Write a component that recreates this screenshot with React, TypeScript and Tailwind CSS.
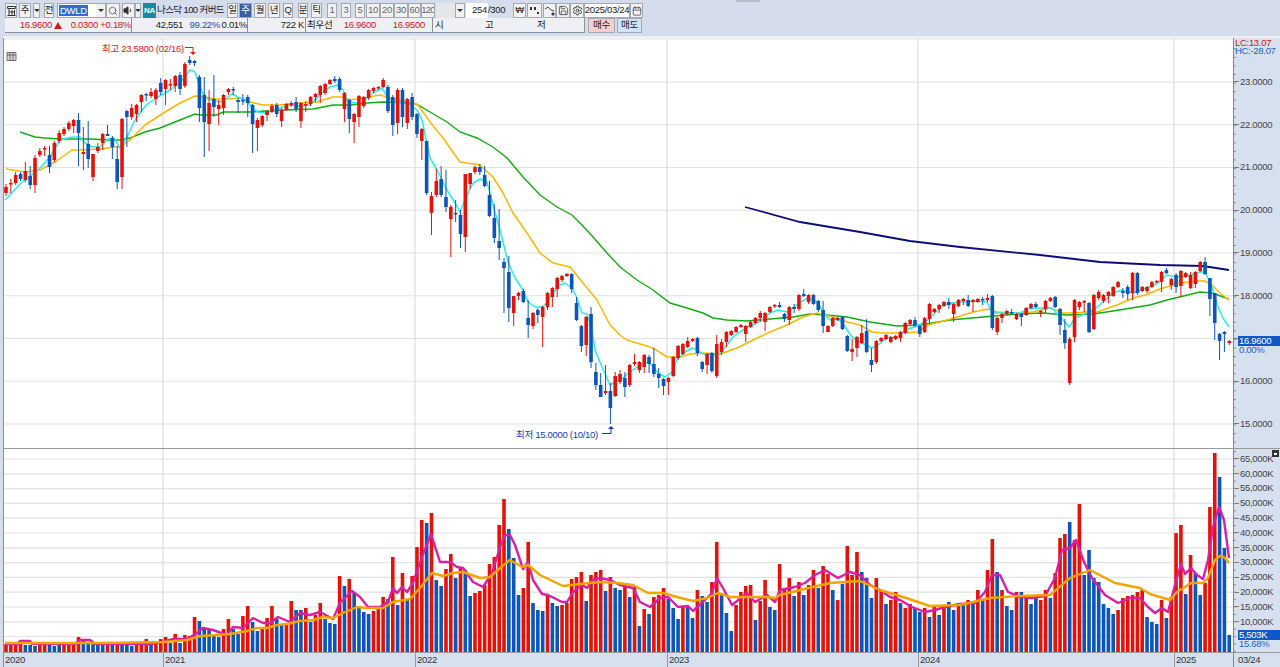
import type { ReactNode } from 'react'
import { Search, Volume1, Save, Settings, Calendar } from 'lucide-react'

const X = (i: number) => 6 + 4.835 * i

// price candles in page px: [top, bottom, wickTop, wickBottom], negative top = blue candle
const CANDLES: number[][] = [
  [187,193,184,196],[183,184,179,193],[175,183,172,185],[-174,179,172,181],[171,180,162,182],[-176,185,166,189],[158,185,155,193],[151,155,148,157],[148,149,146,156],[-155,167,146,173],
  [143,160,141,162],[133,141,130,143],[129,134,127,136],[123,129,121,131],[120,126,119,133],[-120,133,113,166],[152,154,127,170],[-144,159,121,168],[154,177,154,181],[147,151,143,153],
  [134,143,133,150],[-134,136,125,136],[-138,147,136,159],[-159,182,146,189],[119,177,118,189],[-111,117,110,147],[108,117,104,120],[105,114,104,122],[95,102,94,112],[-94,95,93,101],
  [92,96,88,98],[90,99,88,105],[-83,92,78,95],[80,89,79,105],[84,85,79,90],[76,86,75,92],[-75,89,72,95],[64,86,62,88],[-60,63,56,65],[-61,63,60,66],
  [-77,108,75,122],[-95,122,77,157],[103,124,90,151],[-99,107,75,117],[105,109,100,125],[95,108,94,115],[89,92,88,95],[-89,90,87,95],[-100,102,98,113],[-100,101,94,105],
  [-97,103,95,117],[-105,124,104,153],[120,128,118,151],[116,125,115,127],[111,115,110,121],[106,112,104,113],[-105,114,103,117],[110,121,108,127],[104,110,103,111],[103,105,101,107],
  [-102,109,97,112],[103,121,102,128],[104,105,101,112],[97,104,96,106],[94,97,93,102],[86,95,85,103],[84,93,83,95],[80,84,79,85],[-79,81,76,83],[-79,90,77,92],
  [93,109,92,122],[-100,119,99,133],[114,122,113,143],[96,117,95,127],[97,106,96,108],[90,98,89,100],[88,91,87,93],[87,88,86,90],[80,87,78,88],[-87,111,85,113],
  [-97,125,95,136],[90,123,88,134],[-90,117,88,127],[99,123,98,129],[-97,117,93,120],[-114,134,113,138],[129,141,128,160],[-141,193,141,195],[196,213,192,235],[181,195,169,197],
  [-179,195,166,197],[-197,207,170,212],[207,219,205,257],[-213,214,200,222],[-215,234,210,248],[174,237,174,252],[173,184,173,189],[167,172,166,174],[-167,172,164,175],[-175,186,166,187],
  [-195,216,181,217],[-218,238,204,243],[-241,248,209,260],[-262,268,258,313],[-272,308,256,322],[296,313,296,326],[293,296,292,300],[-291,302,289,303],[-318,325,300,338],[313,326,312,329],
  [-310,315,308,323],[307,317,306,347],[293,307,292,310],[288,297,287,307],[278,289,277,297],[276,280,275,282],[274,276,273,277],[-274,289,273,293],[-303,320,297,321],[-326,346,325,352],
  [317,345,316,356],[-314,362,307,368],[-372,385,363,390],[-385,397,373,397],[391,393,365,395],[-391,408,383,424],[376,396,372,397],[374,382,370,384],[-378,387,372,397],[365,385,364,387],
  [362,364,354,366],[362,370,361,373],[355,367,354,373],[-357,364,355,373],[-364,374,348,377],[-374,378,368,388],[-379,386,378,395],[378,382,377,395],[357,376,356,377],[346,358,345,360],
  [344,354,343,355],[341,347,337,348],[339,341,338,342],[-338,353,337,356],[-362,369,361,372],[354,365,353,374],[-353,371,352,373],[344,376,335,378],[342,352,339,355],[332,342,331,347],
  [331,335,330,336],[327,332,326,333],[325,327,324,328],[326,334,325,342],[322,327,321,328],[318,323,317,324],[313,318,311,322],[313,322,312,331],[307,312,306,313],[305,306,304,308],
  [-305,307,302,308],[-314,319,313,322],[307,320,306,325],[-307,309,304,313],[295,309,294,311],[-294,296,289,297],[295,302,294,304],[-295,304,294,305],[-301,310,300,312],[-310,326,301,333],
  [326,332,325,332],[318,326,317,327],[318,320,317,321],[-317,329,316,330],[-336,351,335,352],[349,352,339,361],[337,348,336,357],[333,343,325,344],[-331,352,319,353],[-360,365,348,372],
  [341,362,340,364],[338,341,337,342],[335,339,334,340],[337,342,336,343],[336,339,335,340],[332,338,331,342],[323,333,322,334],[320,324,319,325],[-320,325,317,327],[-326,334,325,337],
  [318,332,317,333],[304,319,303,323],[309,312,308,313],[305,309,304,313],[302,306,301,307],[-302,305,298,309],[304,314,303,322],[300,306,299,307],[299,301,298,305],[-300,306,295,307],
  [300,302,299,312],[299,302,298,303],[-299,300,297,305],[298,300,294,302],[-296,328,295,330],[318,332,317,335],[314,318,313,323],[311,314,310,315],[-312,313,309,315],[314,319,313,320],
  [-314,317,313,326],[308,315,307,316],[304,308,303,309],[-304,307,302,308],[311,312,310,317],[301,309,300,313],[298,301,297,302],[-297,307,296,308],[-309,325,308,335],[-330,343,319,349],
  [339,383,337,385],[300,337,299,342],[302,307,301,310],[301,302,300,312],[-303,332,302,333],[295,329,294,330],[292,298,290,300],[295,301,294,303],[292,296,291,303],[287,296,286,297],
  [282,287,281,288],[-291,293,288,298],[-287,294,285,300],[273,293,272,300],[-273,293,272,295],[287,291,286,292],[287,291,286,293],[282,287,281,288],[281,282,280,283],[272,282,271,292],
  [-270,273,268,274],[279,285,278,290],[-275,287,273,293],[271,286,270,297],[273,277,272,278],[275,288,272,289],[272,284,271,288],[262,271,261,272],[-262,274,257,275],[-278,299,278,316],
  [-293,323,293,340],[-334,341,333,360],[-332,334,331,352],[341,343,340,345],
]

// volume bar tops in page px, negative = blue bar
const VOLUME: number[] = [
  644,644,644,642,-645,-645,-646,645,645,-645,-646,-645,645,645,645,637,-641,-642,-643,-645,
  -645,642,-644,642,-644,-645,-646,645,645,639,-644,644,639,637,-643,634,-643,635,636,617,
  -621,-628,-630,-635,-637,629,619,-629,-634,616,606,-622,-631,628,618,606,-619,-625,624,601,
  -610,-610,608,-622,615,603,-619,-623,-624,576,-586,579,-593,-608,-612,-614,611,609,597,-599,
  557,-605,573,-600,576,547,520,-523,513,-580,-586,569,554,-578,568,-570,-596,593,591,585,
  564,557,525,499,-529,-558,-595,588,542,-603,-610,-611,596,-603,-606,605,603,579,577,572,
  -601,575,572,570,-591,577,-588,-590,586,-597,587,-626,609,-614,597,595,588,-599,-608,-619,
  607,-607,-618,590,-596,-602,582,542,-593,-613,-631,605,592,586,585,-620,601,580,-607,-610,
  564,590,578,-596,582,-595,585,570,-588,566,574,-590,600,-584,546,575,552,-572,-578,-598,
  578,590,-604,600,592,-603,608,604,-608,-612,608,-617,605,-615,605,-602,-610,603,-605,600,
  -602,590,-600,570,539,-572,590,-606,-610,592,-592,596,-604,-596,600,590,-598,573,538,534,
  -522,540,504,-575,-550,-578,-582,-604,-608,-614,610,598,596,595,592,590,-617,-622,-624,600,
  -618,597,533,525,-594,555,-573,-595,583,507,453,-477,-548,-635,
]

const CYAN = '5,200 22,182 38,170 50,157 60,140 72,137 80,137 85,143 92,147 100,147 108,139 114,138 120,148 128,135 135,120 146,105 158,97 170,90 180,83 190,70 195,72 200,87 205,98 215,101 222,102 232,94 240,98 247,100 252,108 258,112 265,113 272,110 280,108 290,105 300,106 310,105 315,100 322,93 330,87 337,85 343,90 348,102 357,103 363,102 368,97 373,93 382,88 388,98 395,102 403,103 408,103 417,110 422,120 430,158 437,170 447,190 455,203 460,212 467,195 473,183 480,179 487,182 493,205 500,230 508,262 515,278 523,290 528,302 535,307 542,307 548,302 553,293 560,285 565,283 572,288 577,298 582,313 587,314 592,330 595,350 602,367 610,385 620,380 630,372 640,365 648,362 653,366 658,373 665,377 672,372 677,360 685,352 692,348 697,350 703,354 717,355 720,353 727,345 733,337 740,332 748,327 757,323 763,319 770,313 778,310 787,312 793,308 800,302 808,298 817,302 823,312 830,320 837,319 842,322 847,330 853,338 860,342 866,345 872,348 878,345 887,338 897,337 905,330 917,326 928,320 935,313 943,305 952,303 962,302 977,301 987,302 992,313 1000,313 1010,313 1020,313 1028,309 1040,308 1052,308 1058,315 1063,320 1069,327 1075,318 1087,313 1095,309 1103,302 1113,293 1122,290 1133,293 1147,288 1158,283 1167,275 1177,277 1187,276 1200,272 1205,272 1212,287 1218,307 1223,318 1229,327'
const ORANGE = '6,169 25,172 40,170 55,162 65,155 72,150 80,150 100,149 115,147 120,147 130,140 145,125 165,112 180,103 195,96 205,97 215,99 227,99 240,98 250,102 263,105 280,105 300,103 317,102 333,97 343,97 350,100 363,98 380,95 393,99 413,103 418,105 430,122 443,138 460,162 480,165 493,177 503,193 513,213 527,233 540,253 553,263 570,267 583,283 597,300 610,325 620,335 627,340 637,343 653,348 667,357 680,357 690,354 703,353 720,354 737,348 753,340 770,332 787,325 803,317 817,313 833,317 847,322 860,325 872,332 883,333 903,333 917,332 928,325 940,322 957,317 973,312 988,309 997,312 1013,313 1033,312 1050,308 1063,313 1073,313 1087,312 1097,312 1117,305 1133,298 1145,295 1160,289 1180,283 1197,281 1205,281 1212,285 1220,293 1229,300'
const GREEN = '20,132 35,137 45,138 60,139 90,139 110,140 120,140 130,138 145,132 160,128 180,120 195,114 200,115 217,115 223,112 250,112 283,110 313,109 333,105 350,105 367,103 383,102 413,103 418,105 430,112 447,122 460,132 477,138 493,147 507,158 523,177 540,195 557,207 572,215 582,225 593,237 607,253 620,267 637,280 653,290 670,303 687,308 703,313 713,318 727,320 747,321 770,319 793,317 810,314 827,315 847,317 870,322 897,326 920,325 950,320 983,317 1017,314 1043,313 1067,315 1093,314 1113,311 1150,305 1167,300 1200,292 1212,293 1229,299'
const NAVY = '745,207 800,222 860,232 910,241 960,247 1040,255 1100,262 1140,264 1160,265 1203,266 1229,270'
const VOL_MAGENTA = '5,644 18,644 20,641 30,641 32,644 75,644 80,640 90,640 95,644 150,644 163,642 173,639 187,639 197,633 203,628 213,630 227,635 233,627 243,628 253,618 263,623 270,623 278,617 290,622 300,613 310,615 320,612 333,619 340,603 352,591 360,597 368,607 380,607 388,602 393,588 397,593 402,587 407,592 413,583 422,557 431,534 440,562 450,562 457,567 463,568 473,582 483,587 492,573 500,547 505,535 510,535 515,545 523,569 528,562 533,580 542,594 548,595 562,602 567,602 573,592 582,585 587,588 593,580 600,578 610,580 620,585 633,588 640,602 650,607 660,598 668,597 678,607 688,606 693,611 703,602 712,593 717,578 723,588 732,605 747,593 755,602 767,595 775,602 780,590 795,587 805,583 815,575 825,570 838,578 850,572 860,575 870,585 880,590 890,597 900,600 912,607 925,612 935,610 945,607 960,604 975,603 985,592 992,575 1000,575 1008,592 1020,597 1032,598 1045,596 1055,578 1062,550 1070,548 1076,540 1084,562 1092,578 1105,595 1118,603 1130,598 1140,598 1148,607 1155,613 1162,608 1168,612 1175,585 1181,564 1185,574 1191,568 1197,575 1203,579 1208,560 1213,527 1219,507 1224,520 1229,558'
const VOL_ORANGE = '5,643 100,643 163,642 187,640 200,636 217,635 230,634 247,631 257,628 267,628 277,625 287,624 300,621 313,620 323,617 333,618 343,613 357,607 367,608 383,608 393,602 410,599 420,588 432,573 443,576 453,573 463,572 480,578 490,577 500,568 510,560 522,567 528,565 540,575 563,586 580,584 600,582 617,583 633,585 648,593 663,593 677,597 693,601 707,598 718,593 730,597 767,597 775,598 780,595 800,590 830,583 860,581 880,590 900,596 930,606 960,605 990,598 1020,596 1050,595 1070,578 1090,570 1115,583 1140,588 1150,594 1160,597 1170,600 1177,592 1185,587 1191,583 1203,583 1208,578 1215,560 1220,556 1224,557 1229,563'

const PRICE_LABELS = ['23.0000', '22.0000', '21.0000', '20.0000', '19.0000', '18.0000', '', '16.0000', '15.0000']
const VOL_LABELS = ['65,000K', '60,000K', '55,000K', '50,000K', '45,000K', '40,000K', '35,000K', '30,000K', '25,000K', '20,000K', '15,000K', '10,000K']
const YEAR_GRID = [163, 415, 667, 918, 1174]

function Btn({ className = '', children }: { className?: string; children?: ReactNode }) {
  return (
    <div className={`h-[15px] flex items-center justify-center shrink-0 border border-[#a3a8b2] bg-[#f1f1f1] overflow-hidden ${className}`}>
      {children}
    </div>
  )
}

function Caret() {
  return <span className="w-0 h-0 border-x-[3px] border-x-transparent border-t-[3px] border-t-[#333]" />
}

function Toolbar() {
  return (
    <div className="relative pt-[3px] pl-[5px] h-[36px] shrink-0 bg-[#d5dcec] text-[#222] text-[9.5px] tracking-[-0.3px]">
      <div className="absolute left-[736px] top-0 w-[24px] h-[2px] bg-[#b8bcc4]" />
      <div className="flex h-[15px] items-center">
        <Btn className="w-[12px]">
          <svg width="9" height="10" viewBox="0 0 9 10" fill="none" stroke="#333"><path d="M.5.5h8v2h-8zM2 2.5v7M5 4v5M7.5 4v5M2 6h6M.5 9.5h8" /></svg>
        </Btn>
        <Btn className="ml-[2px] w-[12px]">주</Btn>
        <Btn className="ml-[2px] w-[7px]"><Caret /></Btn>
        <Btn className="ml-[4px] w-[10px]">전</Btn>
        <div className="ml-[3px] w-[49px] h-[15px] flex items-center bg-white border border-[#a3a8b2]">
          <span className="ml-[1px] bg-[#2f6fd0] text-white px-[1px] leading-[11px]">DWLD</span>
          <Btn className="ml-auto w-[9px] !h-[13px] border-0"><Caret /></Btn>
        </div>
        <Btn className="w-[14px]"><Search size={10} strokeWidth={1.6} color="#444" /></Btn>
        <Btn className="ml-[2px] w-[13px]"><Volume1 size={11} fill="#333" color="#333" /></Btn>
        <Btn className="w-[6px]"><Caret /></Btn>
        <div className="ml-[2px] w-[13px] h-[15px] flex items-center justify-center bg-[#148c9c] text-white text-[8px] font-bold">NA</div>
        <div className="w-[69px] pl-[1px] whitespace-nowrap tracking-[-0.6px]">나스닥 100 커버드</div>
        <Btn className="ml-[2px] w-[11px]">일</Btn>
        <Btn className="ml-[1px] w-[13px] !bg-[#3a5f9c] text-white">주</Btn>
        <Btn className="ml-[2px] w-[12px]">월</Btn>
        <Btn className="ml-[2px] w-[12px]">년</Btn>
        <Btn className="ml-[3px] w-[10px]">Q</Btn>
        <Btn className="ml-[5px] w-[10px]">분</Btn>
        <Btn className="ml-[3px] w-[11px]">틱</Btn>
        <Btn className="ml-[5px] w-[10px] text-[#666]">1</Btn>
        <Btn className="ml-[4px] w-[10px] text-[#666]">3</Btn>
        <Btn className="ml-[4px] w-[10px] text-[#666]">5</Btn>
        <Btn className="ml-[1px] w-[14px] text-[#666]">10</Btn>
        <Btn className="w-[14px] text-[#666]">20</Btn>
        <Btn className="w-[14px] text-[#666]">30</Btn>
        <Btn className="w-[13px] text-[#666]">60</Btn>
        <Btn className="w-[14px] text-[#666] tracking-[-0.8px]">120</Btn>
        <div className="ml-[1px] w-[19px] h-[15px] bg-[#e4e6ea]" />
        <Btn className="w-[10px]"><Caret /></Btn>
        <div className="ml-[1px] w-[22px] h-[15px] flex items-center justify-end pr-[1px] bg-white">254</div>
        <div className="w-[18px]">/300</div>
        <Btn className="ml-[7px] w-[13px]">₩</Btn>
        <Btn className="ml-[1px] w-[15px]">
          <svg width="11" height="10" viewBox="0 0 11 10" fill="#333"><path d="M1 1h2v3H1zM5 1h2v3H5zM8 6h2v2H8z" /></svg>
        </Btn>
        <Btn className="ml-[1px] w-[13px]">
          <svg width="10" height="10" viewBox="0 0 10 10" fill="none" stroke="#444"><path d="M0 3l3-2 3 3 3 1" /><path d="M7 7h2v2H7z" fill="#444" /></svg>
        </Btn>
        <Btn className="w-[14px]"><Save size={11} strokeWidth={1.6} color="#333" /></Btn>
        <Btn className="w-[14px]"><Settings size={11} strokeWidth={2} color="#333" /></Btn>
        <div className="w-[46px] h-[15px] flex items-center justify-center bg-white border border-[#a3a8b2]">2025/03/24</div>
        <Btn className="w-[13px]"><Calendar size={10} strokeWidth={1.6} color="#333" /></Btn>
      </div>
      <div className="flex h-[15px] items-center text-[#222]">
        <div className="w-[127px] h-full flex items-center bg-[#eef0f3] border-r border-b border-[#8a8f99] text-[#d01818]">
          <span className="w-[47px] text-right">16.9600</span>
          <span className="ml-[2px] w-0 h-0 border-x-[4px] border-x-transparent border-b-[7px] border-b-[#d01818]" />
          <span className="w-[36px] text-right">0.0300</span>
          <span className="w-[33px] text-right">+0.18%</span>
        </div>
        <div className="w-[116px] h-full flex items-center bg-[#eef0f3] border-r border-b border-[#8a8f99]">
          <span className="w-[51px] text-right">42,551</span>
          <span className="w-[37px] text-right text-[#2050b0]">99.22%</span>
          <span className="w-[27px] text-right">0.01%</span>
        </div>
        <div className="w-[58px] h-full flex items-center justify-end pr-[1px] bg-[#eef0f3] border-r border-b border-[#8a8f99]">722 K</div>
        <div className="w-[127px] h-full flex items-center bg-[#eef0f3] border-r border-b border-[#8a8f99]">
          <span className="ml-[1px] w-[24px] whitespace-nowrap">최우선</span>
          <span className="w-[45px] text-right text-[#d01818]">16.9600</span>
          <span className="w-[49px] text-right text-[#d01818]">16.9500</span>
        </div>
        <div className="w-[152px] h-full flex items-center bg-[#eef0f3] border-r border-b border-[#8a8f99] pl-[2px]">
          <span className="w-[50px]">시</span>
          <span className="w-[52px]">고</span>
          <span>저</span>
        </div>
        <div className="ml-[3px] w-[27px] h-full flex items-center justify-center bg-[#f6cfc8] border border-[#a3a8b2]">매수</div>
        <div className="ml-[2px] w-[25px] h-full flex items-center justify-center bg-[#cfe3f5] border border-[#a3a8b2]">매도</div>
      </div>
    </div>
  )
}

function Candles() {
  return (
    <>
      {CANDLES.map(([t, b, wt, wb], i) => {
        const x = X(i)
        const color = t < 0 ? '#0b55bb' : '#e5120a'
        const top = Math.abs(t)
        return (
          <g key={i}>
            <line x1={x} x2={x} y1={wt} y2={wb} stroke={color} strokeWidth={1} />
            <rect x={x - 1.8} y={top} width={3.6} height={Math.max(b - top, 1.5)} fill={color} />
          </g>
        )
      })}
    </>
  )
}

function PricePane() {
  return (
    <svg width={1229} height={410} viewBox="4 38 1229 410" className="block bg-white">
      <rect x={4} y={38} width={1229} height={2} fill="#f0f0f0" />
      {[0, 1, 2, 3, 4, 5, 6, 7, 8].map((k) => (
        <line key={k} x1={4} x2={1233} y1={82 + 42.75 * k} y2={82 + 42.75 * k} stroke="#e2e2e2" strokeWidth={1.2} />
      ))}
      {YEAR_GRID.map((x) => <line key={x} x1={x} x2={x} y1={38} y2={448} stroke="#dedede" strokeWidth={1.2} />)}
      <polyline points={NAVY} fill="none" stroke="#0c0c78" strokeWidth={1.8} />
      <polyline points={GREEN} fill="none" stroke="#12ad12" strokeWidth={1.4} />
      <polyline points={ORANGE} fill="none" stroke="#fbb800" strokeWidth={1.5} strokeLinejoin="round" />
      <polyline points={CYAN} fill="none" stroke="#25eeee" strokeWidth={1.5} strokeLinejoin="round" />
      <Candles />
      <g fill="#555" stroke="#555" strokeWidth={0.8}>
        <path d="M7 52.5h9v8H7zM7 55h9M10 52.5v8M13 52.5v8" fill="#d8d8d8" />
      </g>
      <text x={102} y={52} fontSize={9.5} letterSpacing={-0.3} fill="#e01818">최고 23.5800 (02/16)</text>
      <path d="M185 47.5h8v5" fill="none" stroke="#e01818" />
      <path d="M190 52h6l-3 3z" fill="#e01818" />
      <text x={516} y={438} fontSize={9.5} letterSpacing={-0.3} fill="#1838c0">최저 15.0000 (10/10)</text>
      <path d="M602 433.5h9v-5" fill="none" stroke="#1838c0" />
      <path d="M608 429h6l-3-3z" fill="#1838c0" />
    </svg>
  )
}

function VolumePane() {
  return (
    <svg width={1229} height={203} viewBox="4 449 1229 203" className="block bg-white">
      {VOL_LABELS.map((_, k) => (
        <line key={k} x1={4} x2={1233} y1={459 + 14.8 * k} y2={459 + 14.8 * k} stroke="#e2e2e2" strokeWidth={1.2} />
      ))}
      <line x1={4} x2={1233} y1={636.5} y2={636.5} stroke="#e2e2e2" strokeWidth={1.2} />
      {YEAR_GRID.map((x) => <line key={x} x1={x} x2={x} y1={449} y2={652} stroke="#dedede" strokeWidth={1.2} />)}
      {VOLUME.map((v, i) => (
        <rect key={i} x={X(i) - 1.8} y={Math.abs(v)} width={3.6} height={652 - Math.abs(v)} fill={v < 0 ? '#0b55bb' : '#e5120a'} />
      ))}
      <polyline points={VOL_MAGENTA} fill="none" stroke="#d81fa8" strokeWidth={2.4} strokeLinejoin="round" />
      <polyline points={VOL_ORANGE} fill="none" stroke="#f2a400" strokeWidth={2.4} strokeLinejoin="round" />
    </svg>
  )
}

// small tick marks down the left edge of an axis column
function AxisTicks({ height, start, step }: { height: number; start: number; step: number }) {
  const ys: number[] = []
  for (let y = start; y < height; y += step) ys.push(y)
  return (
    <svg width={3} height={height} className="absolute left-0 top-0">
      {ys.map((y) => <line key={y} x1={0} x2={2} y1={y} y2={y} stroke="#8a8f99" />)}
    </svg>
  )
}

function PriceAxis() {
  return (
    <div className="relative h-[410px] text-[#444]">
      <AxisTicks height={410} start={10.8} step={8.55} />
      <div className="h-[22.6px] leading-[8px] pt-[1px] pl-[1px] text-[9.5px] tracking-[-0.3px] whitespace-nowrap">
        <div className="text-[#c82020]">LC:13.07</div>
        <div className="text-[#1f62c8]">HC:-28.07</div>
      </div>
      {PRICE_LABELS.map((l, k) => (
        <div key={k} className="h-[42.75px] flex items-center">
          <span className="w-[5px] h-px bg-[#777]" />
          <span className="ml-[1px]">{l}</span>
        </div>
      ))}
      <div className="absolute left-[4px] top-[298px] w-[42px] h-[10px] leading-[10px] bg-[#1258c4] text-white pl-[1px]">16.9600</div>
      <div className="absolute left-[4px] top-[307px] h-[10px] leading-[10px] text-[#1f62c8] pl-[1px]">0.00%</div>
    </div>
  )
}

function VolumeAxis() {
  return (
    <div className="relative h-[203px] pt-[2.6px] text-[#444]">
      <AxisTicks height={203} start={2.6} step={7.4} />
      {VOL_LABELS.map((l) => (
        <div key={l} className="h-[14.8px] flex items-center">
          <span className="w-[5px] h-px bg-[#777]" />
          <span className="ml-[1px]">{l}</span>
        </div>
      ))}
      <div className="absolute right-[1px] top-[1px] w-[7px] h-[7px] bg-[#333] flex items-center justify-center">
        <span className="w-[3px] h-[2px] bg-white" />
      </div>
      <div className="absolute left-[4px] top-[181px] w-[42px] h-[10px] leading-[10px] bg-[#1258c4] text-white pl-[1px]">5,503K</div>
      <div className="absolute left-[4px] top-[190px] h-[10px] leading-[10px] text-[#1f62c8] pl-[1px]">15.68%</div>
    </div>
  )
}

export default function App() {
  return (
    <div className="w-[1280px] h-[667px] flex flex-col overflow-hidden bg-[#d5dcec] font-['Liberation_Sans','Noto_Sans_CJK_KR',sans-serif] text-[9.5px] tracking-[-0.3px]">
      <Toolbar />
      <div className="ml-[3px] h-[2px] shrink-0 bg-[#f0f0f0]" />
      <div className="ml-[3px] flex flex-col border-l border-[#8f8f8f]">
        <div className="flex h-[410px]">
          <PricePane />
          <div className="flex-1 bg-[#d6e0ef] border-l border-[#888]"><PriceAxis /></div>
        </div>
        <div className="h-px bg-[#9a9a9a]" />
        <div className="flex h-[203px]">
          <VolumePane />
          <div className="flex-1 bg-[#d6e0ef] border-l border-[#888]"><VolumeAxis /></div>
        </div>
        <div className="flex h-[15px] bg-[#d6e0ef] border-t border-[#9a9a9a] text-[#333] leading-[14px]">
          <div className="w-[159px] pl-[1px]">2020</div>
          <div className="w-[252px] pl-[1px] border-l border-[#9a9a9a]">2021</div>
          <div className="w-[252px] pl-[1px] border-l border-[#9a9a9a]">2022</div>
          <div className="w-[251px] pl-[1px] border-l border-[#9a9a9a]">2023</div>
          <div className="w-[256px] pl-[1px] border-l border-[#9a9a9a]">2024</div>
          <div className="w-[59px] pl-[1px] border-l border-[#9a9a9a]">2025</div>
          <div className="flex-1 pl-[4px] border-l border-[#888]">03/24</div>
        </div>
      </div>
    </div>
  )
}
